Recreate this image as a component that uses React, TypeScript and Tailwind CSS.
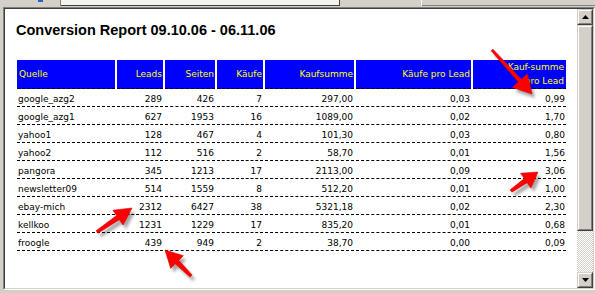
import React from "react";

type Row = [string, string, string, string, string, string, string];

const rows: Row[] = [
    ["google_azg2", "289", "426", "7", "297,00", "0,03", "0,99"],
    ["google_azg1", "627", "1953", "16", "1089,00", "0,02", "1,70"],
    ["yahoo1", "128", "467", "4", "101,30", "0,03", "0,80"],
    ["yahoo2", "112", "516", "2", "58,70", "0,01", "1,56"],
    ["pangora", "345", "1213", "17", "2113,00", "0,09", "3,06"],
    ["newsletter09", "514", "1559", "8", "512,20", "0,01", "1,00"],
    ["ebay-mich", "2312", "6427", "38", "5321,18", "0,02", "2,30"],
    ["kellkoo", "1231", "1229", "17", "835,20", "0,01", "0,68"],
    ["froogle", "439", "949", "2", "38,70", "0,00", "0,09"],
];

// tail -> tip, shaft width, head length, head half width
const arrows = [
    { x1: 492, y1: 50, x2: 532, y2: 94, w: 4, l: 18, h: 10 },
    { x1: 511, y1: 191, x2: 538, y2: 172, w: 5, l: 15, h: 9 },
    { x1: 97, y1: 232, x2: 132, y2: 208, w: 5, l: 17, h: 9 },
    { x1: 191, y1: 276, x2: 165, y2: 250, w: 5, l: 17, h: 9 },
];

function arrowPoints(a: (typeof arrows)[number], dx = 0, dy = 0) {
    const len = Math.hypot(a.x2 - a.x1, a.y2 - a.y1);
    const ux = (a.x2 - a.x1) / len;
    const uy = (a.y2 - a.y1) / len;
    const px = -uy;
    const py = ux;
    const bx = a.x2 - ux * a.l;
    const by = a.y2 - uy * a.l;
    const s = a.w / 2;
    const pts = [
        [a.x1 + px * s * 0.6, a.y1 + py * s * 0.6],
        [bx + px * s, by + py * s],
        [bx + px * a.h, by + py * a.h],
        [a.x2, a.y2],
        [bx - px * a.h, by - py * a.h],
        [bx - px * s, by - py * s],
        [a.x1 - px * s * 0.6, a.y1 - py * s * 0.6],
    ];
    return pts.map(([x, y]) => `${x + dx},${y + dy}`).join(" ");
}

const headers = ["Leads", "Seiten", "Käufe", "Kaufsumme", "Käufe pro Lead"];

export default function App() {
    return (
        <div className="relative w-[595px] h-[293px] bg-[#d4d0c8] overflow-hidden flex flex-col">
            {/* toolbar remnants */}
            <div className="h-[7px] flex items-start">
                <div className="w-[38px]" />
                <div className="w-[5px] h-[2px] bg-[#2b5fd9]" />
                <div className="w-[17px]" />
                <div className="w-[1px] h-[6px] bg-[#808080]" />
                <div className="w-[279px] h-[6px] bg-[#f4f3ee] border-b border-r border-[#404040]" />
                <div className="w-[81px]" />
                <div className="w-[1px] h-[6px] bg-[#ffffff]" />
                <div className="flex-1 h-[6px] border-b border-[#808080]" />
            </div>

            {/* sunken frame */}
            <div className="ml-[3px] w-[592px] h-[283px] border-t border-l border-[#808080] border-b border-r border-b-white border-r-white">
                <div className="w-full h-full flex border-t border-l border-[#404040] border-b border-r border-b-[#d4d0c8] border-r-[#d4d0c8]">
                    {/* page */}
                    <div className="flex-1 bg-white pl-[10px] pt-[14px]">
                        <div className="ml-[1px] h-[15px] leading-[15px] text-[14.5px] font-bold text-black font-['Liberation_Sans',Arial,sans-serif]">
                            Conversion Report 09.10.06 - 06.11.06
                        </div>
                        <table className="mt-[20px] w-[553px] table-fixed border-separate border-spacing-[2px] font-['DejaVu_Sans',Verdana,sans-serif] text-[9px]">
                            <colgroup>
                                <col className="w-[98px]" />
                                <col className="w-[46px]" />
                                <col className="w-[50px]" />
                                <col className="w-[46px]" />
                                <col className="w-[89px]" />
                                <col className="w-[115px]" />
                                <col className="w-[93px]" />
                            </colgroup>
                            <thead>
                                <tr>
                                    <th className="h-[29px] p-0 pl-[2px] bg-[#0000ff] text-[#ffff00] font-normal text-left align-middle leading-[14px] border-b border-dashed border-black">
                                        Quelle
                                    </th>
                                    {headers.map((h) => (
                                        <th
                                            key={h}
                                            className="h-[29px] p-0 pr-[1px] bg-[#0000ff] text-[#ffff00] font-normal text-right align-middle leading-[14px] border-b border-dashed border-black"
                                        >
                                            {h}
                                        </th>
                                    ))}
                                    <th className="h-[29px] p-0 pr-[2px] bg-[#0000ff] text-[#ffff00] font-normal text-right align-middle leading-[14px] border-b border-dashed border-black">
                                        Kauf-summe
                                        <br />
                                        pro Lead
                                    </th>
                                </tr>
                            </thead>
                            <tbody>
                                {rows.map((r) => (
                                    <tr key={r[0]}>
                                        {r.map((c, i) => (
                                            <td
                                                key={i}
                                                className={`h-[16px] p-0 pt-[2px] leading-[13px] text-black align-middle border-b border-dashed border-black ${
                                                    i === 0 ? "text-left pl-[1px]" : "text-right pr-[1px]"
                                                }`}
                                            >
                                                {c}
                                            </td>
                                        ))}
                                    </tr>
                                ))}
                            </tbody>
                        </table>
                    </div>

                    {/* scrollbar */}
                    <div className="w-[16px] flex flex-col bg-[repeating-conic-gradient(#d4d0c8_0_25%,#ffffff_0_50%)] bg-[length:2px_2px]">
                        <ScrollButton up />
                        <div className="h-[206px] border-t border-l border-[#d4d0c8] border-b border-r border-b-[#404040] border-r-[#404040]">
                            <div className="w-full h-full bg-[#d4d0c8] border-t border-l border-white border-b border-r border-b-[#808080] border-r-[#808080]" />
                        </div>
                        <div className="flex-1" />
                        <ScrollButton />
                    </div>
                </div>
            </div>

            {/* red arrows */}
            <svg className="absolute left-0 top-0 pointer-events-none" width="595" height="293">
                <defs>
                    <filter id="blur" x="-50%" y="-50%" width="200%" height="200%">
                        <feGaussianBlur stdDeviation="1.6" />
                    </filter>
                </defs>
                {arrows.map((a, i) => (
                    <g key={i}>
                        <polygon points={arrowPoints(a, 3, 4)} fill="#000" opacity="0.35" filter="url(#blur)" />
                        <polygon points={arrowPoints(a)} fill="#ff0000" stroke="#e00000" strokeWidth="0.6" strokeLinejoin="round" />
                    </g>
                ))}
            </svg>
        </div>
    );
}

function ScrollButton({ up }: { up?: boolean }) {
    return (
        <div className="h-[16px] border-t border-l border-[#d4d0c8] border-b border-r border-b-[#404040] border-r-[#404040]">
            <div className="w-full h-full bg-[#d4d0c8] border-t border-l border-white border-b border-r border-b-[#808080] border-r-[#808080] flex items-center justify-center">
                <svg width="7" height="4" viewBox="0 0 7 4">
                    {up ? <polygon points="3.5,0 7,4 0,4" fill="#000" /> : <polygon points="0,0 7,0 3.5,4" fill="#000" />}
                </svg>
            </div>
        </div>
    );
}
